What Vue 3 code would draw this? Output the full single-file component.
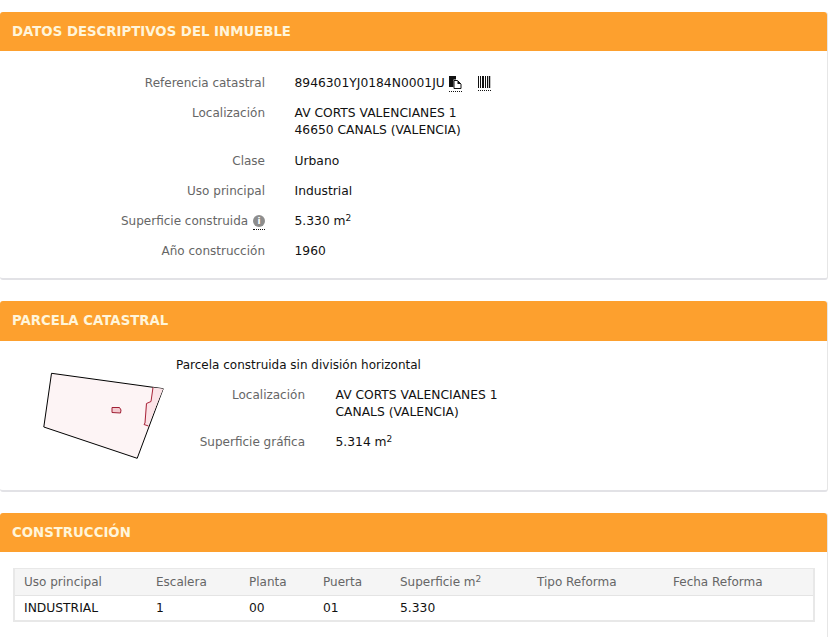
<template>
  <div class="page">
    <section class="panel first">
      <h2 class="panel-title">DATOS DESCRIPTIVOS DEL INMUEBLE</h2>
      <div class="panel-body data-list">
        <div class="row">
          <div class="label">Referencia catastral</div>
          <div class="value ref-line">
            <span>8946301YJ0184N0001JU</span>
            <span class="icon-link copy">
              <svg width="13" height="13" viewBox="0 0 13 13">
                <path d="M0 0H7V3.5H4.5V11H0Z" fill="#111" />
                <path d="M5 4.5H8.5L12 8V12.5H5Z" fill="#fff" stroke="#111" stroke-width="1" />
                <path d="M8.5 4.5V8H12Z" fill="#111" />
              </svg>
            </span>
            <span class="icon-link barcode">
              <svg width="13" height="12" viewBox="0 0 13 12">
                <path v-for="bar in barcodeBars" :key="bar.x" :d="`M${bar.x} 0V12`" :stroke-width="bar.w" stroke="#111" fill="none" />
              </svg>
            </span>
          </div>
        </div>
        <div class="row tall">
          <div class="label">Localización</div>
          <div class="value">AV CORTS VALENCIANES 1<br />46650 CANALS (VALENCIA)</div>
        </div>
        <div class="row">
          <div class="label">Clase</div>
          <div class="value">Urbano</div>
        </div>
        <div class="row">
          <div class="label">Uso principal</div>
          <div class="value">Industrial</div>
        </div>
        <div class="row">
          <div class="label">
            Superficie construida
            <span class="info">i</span>
          </div>
          <div class="value">5.330 m<sup>2</sup></div>
        </div>
        <div class="row">
          <div class="label">Año construcción</div>
          <div class="value">1960</div>
        </div>
      </div>
    </section>

    <section class="panel second">
      <h2 class="panel-title">PARCELA CATASTRAL</h2>
      <div class="panel-body parcel">
        <svg class="parcel-map" width="146" height="110" viewBox="0 0 145 110">
          <polygon points="21,13.3 132.7,28.7 106.7,98.3 13.3,67" fill="#fdf4f5" stroke="#000" stroke-width="1" />
          <polygon points="122.5,27.5 132.7,28.7 117.5,66 113.5,64.5 115,43 120.5,41" fill="#fbe3e7" stroke="none" />
          <polyline points="122.5,27.5 120.5,41.5 116,43.5 114.5,63 113.5,64.5 118,66" fill="none" stroke="#a82238" stroke-width="1" />
          <polygon points="81.5,47.5 89,47.5 90.5,50 90,53 81.5,52.5" fill="#f3c9cf" stroke="#a01f34" stroke-width="1" />
        </svg>
        <div class="parcel-info">
          <div class="parcel-heading">Parcela construida sin división horizontal</div>
          <div class="parcel-row">
            <div class="parcel-label">Localización</div>
            <div class="value">AV CORTS VALENCIANES 1<br />CANALS (VALENCIA)</div>
          </div>
          <div class="parcel-row">
            <div class="parcel-label">Superficie gráfica</div>
            <div class="value">5.314 m<sup>2</sup></div>
          </div>
        </div>
      </div>
    </section>

    <section class="panel third">
      <h2 class="panel-title">CONSTRUCCIÓN</h2>
      <div class="panel-body build">
        <table class="build-table">
          <colgroup>
            <col v-for="w in colWidths" :key="w.name" :style="{ width: w.px + 'px' }" />
          </colgroup>
          <thead>
            <tr>
              <th>Uso principal</th>
              <th>Escalera</th>
              <th>Planta</th>
              <th>Puerta</th>
              <th>Superficie m<sup>2</sup></th>
              <th>Tipo Reforma</th>
              <th>Fecha Reforma</th>
            </tr>
          </thead>
          <tbody>
            <tr>
              <td>INDUSTRIAL</td>
              <td>1</td>
              <td>00</td>
              <td>01</td>
              <td>5.330</td>
              <td></td>
              <td></td>
            </tr>
          </tbody>
        </table>
      </div>
    </section>
  </div>
</template>

<script setup>
const barcodeBars = [
  { x: 0.5, w: 1 },
  { x: 2.5, w: 1 },
  { x: 5, w: 2 },
  { x: 7.5, w: 1 },
  { x: 9.5, w: 1 },
  { x: 11.5, w: 1.5 }
]

const colWidths = [
  { name: 'uso', px: 132 },
  { name: 'escalera', px: 93 },
  { name: 'planta', px: 74 },
  { name: 'puerta', px: 77 },
  { name: 'superficie', px: 137 },
  { name: 'tipo', px: 136 },
  { name: 'fecha', px: 151 }
]
</script>

<style>
html,
body {
  background: #fff;
  overflow: hidden;
}
</style>

<style scoped>
.page {
  width: 828px;
  padding-top: 12px;
  font-family: Verdana, "DejaVu Sans", sans-serif;
  font-size: 12px;
  line-height: 17px;
  color: #111;
}

.panel {
  margin-bottom: 21px;
  background: #fff;
  border-radius: 3px;
  border-right: 1px solid #e6e6e6;
  border-bottom: 2px solid #e2e2e6;
}

.panel-title {
  margin: 0;
  height: 39px;
  padding-left: 12px;
  background: #fda02e;
  border-radius: 3px 3px 0 0;
  color: #fff5da;
  font-size: 13.3px;
  font-weight: bold;
  line-height: 39px;
}

.second .panel-title {
  height: 40px;
  line-height: 40px;
}

.data-list {
  padding: 24px 0 18px;
  display: flex;
  flex-direction: column;
  gap: 13px;
}

.row {
  display: flex;
}

.row.tall {
  padding-bottom: 1px;
}

.label {
  width: 265px;
  text-align: right;
  color: #666;
}

.value {
  color: #111;
  font-size: 12.3px;
}

.row .value {
  margin-left: 29.5px;
}

.ref-line {
  display: flex;
  align-items: center;
}

.icon-link {
  display: flex;
  padding-bottom: 2px;
  border-bottom: 1px dotted #111;
}

.copy {
  margin-left: 4px;
}

.barcode {
  margin-left: 16px;
}

.info {
  position: relative;
  display: inline-block;
  width: 12px;
  height: 12px;
  margin-left: 1px;
  border-radius: 50%;
  background: #8d8d8d;
  color: #fff;
  font-size: 9px;
  font-weight: bold;
  line-height: 12px;
  text-align: center;
  vertical-align: 1px;
}

.info::after {
  content: "";
  position: absolute;
  left: 0;
  right: 0;
  bottom: -3px;
  border-bottom: 1px dotted #111;
}

sup {
  font-size: 9px;
  line-height: 0;
  vertical-align: 4px;
}

.parcel {
  display: flex;
  height: 149px;
  padding-top: 16px;
  box-sizing: border-box;
}

.parcel-map {
  flex: none;
  margin: 3px 0 0 30px;
}

.parcel-info {
  display: flex;
  flex-direction: column;
  gap: 13px;
}

.parcel-row {
  display: flex;
  gap: 30.5px;
}

.parcel-label {
  width: 129px;
  text-align: right;
  color: #666;
}

.build {
  padding: 16px 0 16px 13px;
}

.build-table {
  width: 800px;
  table-layout: fixed;
  border-collapse: collapse;
  border: 1px solid #e8e8e8;
  border-width: 1px 2px 2px 2px;
  font-size: 12px;
}

.build-table th,
.build-table td {
  padding: 0 0 0 10px;
  text-align: left;
  font-weight: normal;
}

.build-table th:first-child,
.build-table td:first-child {
  padding-left: 9px;
}

.build-table th {
  height: 26px;
  background: #f5f5f5;
  border-bottom: 1px solid #e4e4e4;
  color: #666;
}

.build-table td {
  height: 24px;
  color: #111;
  font-size: 12.3px;
}
</style>
